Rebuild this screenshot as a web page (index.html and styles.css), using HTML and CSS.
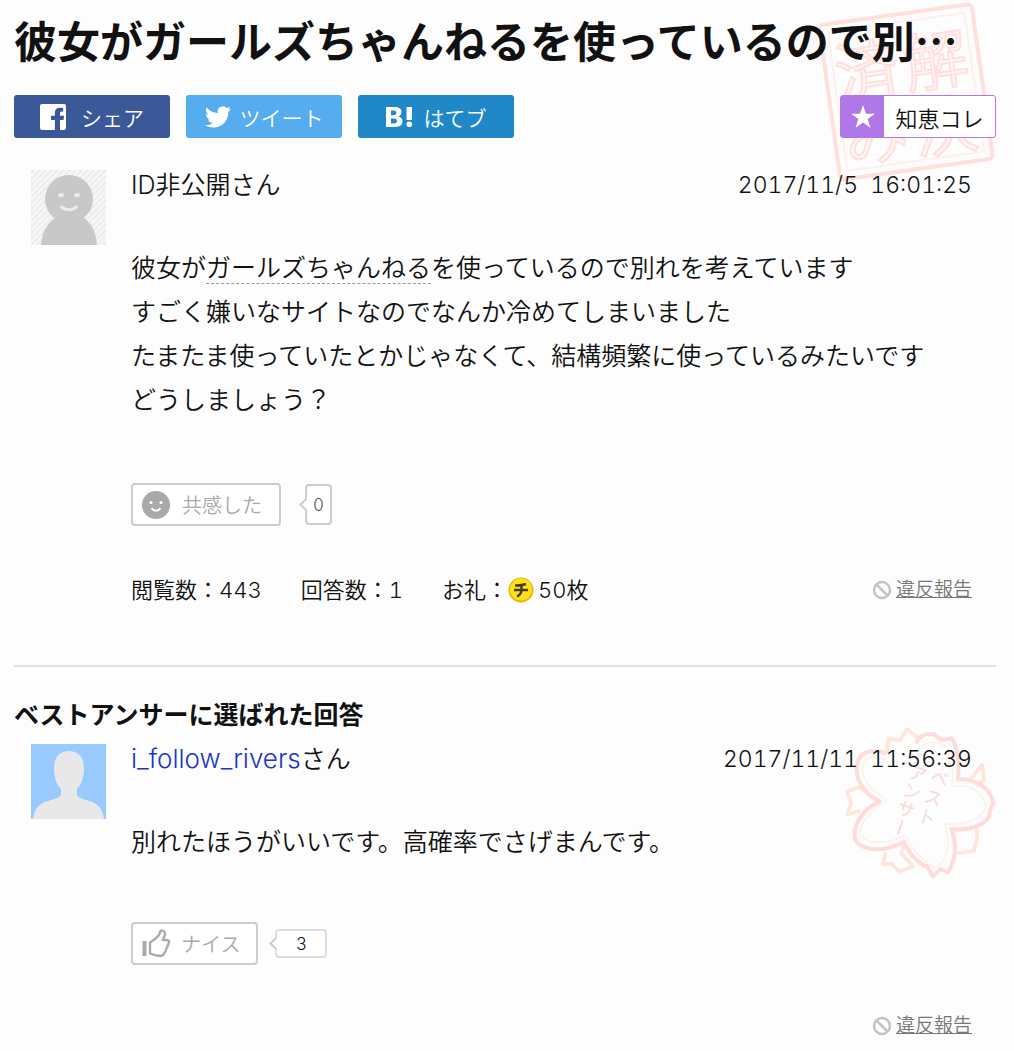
FILE: index.html
```html
<!DOCTYPE html>
<html lang="ja">
<head>
    <meta charset="UTF-8">
    <meta name="viewport" content="width=device-width, initial-scale=1.0">
    <title>彼女がガールズちゃんねるを使っているので別… - 知恵袋</title>
    <link rel="stylesheet" href="styles.css">
</head>
<body>
    <main class="page">
        <!-- solved stamp -->
        <svg class="stamp stamp-solved" viewBox="0 0 190 190" aria-hidden="true">
            <g transform="rotate(-8 95 95)" fill="none" stroke="#ffe0dd" stroke-width="3">
                <rect x="19" y="17" width="154" height="156" rx="4" stroke-width="4"/>
                <rect x="27" y="25" width="138" height="140" rx="2" stroke="#fff0ec" stroke-width="2"/>
                <g class="stamp-text" stroke-width="2">
                    <text x="28" y="92">済</text>
                    <text x="28" y="158">み</text>
                    <text x="98" y="92">解</text>
                    <text x="98" y="158">決</text>
                </g>
            </g>
        </svg>

        <h1 class="title">彼女がガールズちゃんねるを使っているので別…</h1>

        <div class="share">
            <button type="button" class="share-btn facebook">
                <svg width="26" height="26" viewBox="0 0 26 26" aria-hidden="true">
                    <path fill="#fff" d="M2 0h22a2 2 0 0 1 2 2v22a2 2 0 0 1-2 2h-4V16h3.500l.6-4.200H20V9.500c0-1.300.5-2 2-2h1.200V4c-.5-.1-1.700-.2-3-.2-3.200 0-5.300 1.900-5.300 5.200v2.800H11V16h3.900v10H2a2 2 0 0 1-2-2V2a2 2 0 0 1 2-2z"/>
                </svg>
                <span>シェア</span>
            </button>
            <button type="button" class="share-btn twitter">
                <svg width="26" height="26" viewBox="0 0 24 24" aria-hidden="true">
                    <path fill="#fff" d="M23.950 4.570a10 10 0 0 1-2.820.770 4.960 4.960 0 0 0 2.160-2.720c-.950.550-2 .950-3.130 1.180a4.920 4.920 0 0 0-8.380 4.480C7.690 8.090 4.070 6.130 1.640 3.160a4.820 4.820 0 0 0-.670 2.480c0 1.710.870 3.210 2.190 4.100a4.900 4.900 0 0 1-2.230-.620v.060a4.920 4.920 0 0 0 3.950 4.830 5 5 0 0 1-2.210.080 4.940 4.940 0 0 0 4.600 3.420A9.870 9.870 0 0 1 0 19.540a13.990 13.990 0 0 0 7.550 2.210c9.050 0 14-7.500 14-13.980 0-.210 0-.420-.020-.630a9.940 9.940 0 0 0 2.460-2.550z"/>
                </svg>
                <span>ツイート</span>
            </button>
            <button type="button" class="share-btn hatena">
                <svg width="27" height="22" viewBox="0 0 27 22" aria-hidden="true">
                    <path fill="#fff" fill-rule="evenodd" d="M0 1h8c5 0 7.500 1.500 7.500 5 0 2.500-1.300 4-3.500 4.500 2.800.4 4.500 2 4.500 4.800 0 3.900-2.800 5.700-7.500 5.700H0zM5 4.500v4.700h2.200c2.200 0 3.200-.7 3.200-2.400 0-1.600-1-2.300-3.200-2.300zM5 12.500v5h2.600c2.300 0 3.400-.8 3.400-2.500s-1.100-2.500-3.400-2.500z"/>
                    <path fill="#fff" d="M20.500 1h5.500v13h-5.500z"/>
                    <circle fill="#fff" cx="23.300" cy="18.300" r="2.800"/>
                </svg>
                <span>はてブ</span>
            </button>
            <button type="button" class="collect">
                <span class="collect-icon">
                    <svg width="26" height="26" viewBox="0 0 24 24" aria-hidden="true">
                        <path fill="#fff" d="M12 1l2.700 8h8.300l-6.700 4.900 2.600 8.100L12 17.100 5.100 22l2.600-8.100L1 9h8.300z"/>
                    </svg>
                </span>
                <span class="collect-label">知恵コレ</span>
            </button>
        </div>

        <article class="post">
            <svg class="avatar" viewBox="0 0 75 75" role="img" aria-label="ID非公開">
                <defs>
                    <pattern id="hatch" width="6" height="6" patternUnits="userSpaceOnUse">
                        <path d="M0 6L6 0" stroke="#fafafa" stroke-width="1.500"/>
                    </pattern>
                </defs>
                <path fill="#eee" d="M0 0h75v75H0z"/>
                <path fill="url(#hatch)" d="M0 0h75v75H0z"/>
                <path fill="#c8c8c8" d="M10 75c1-15 8-24 16-28h25c8 4 14 13 15 28z"/>
                <circle cx="38" cy="29" r="24" fill="#c8c8c8"/>
                <ellipse cx="30" cy="25" rx="3" ry="2" fill="#ececec"/>
                <ellipse cx="46" cy="25" rx="3" ry="2" fill="#ececec"/>
                <path d="M30 36c4 5 12 5 16 0" fill="none" stroke="#ececec" stroke-width="3"/>
            </svg>
            <div class="post-body">
                <header class="post-head">
                    <span class="name">ID非公開さん</span>
                    <time datetime="2017-11-05T16:01:25">2017/11/5 &nbsp;16:01:25</time>
                </header>
                <p class="text">彼女が<a class="keyword" href="#">ガールズちゃんねる</a>を使っているので別れを考えています<br>
                    すごく嫌いなサイトなのでなんか冷めてしまいました<br>
                    たまたま使っていたとかじゃなくて、結構頻繁に使っているみたいです<br>
                    どうしましょう？</p>
                <div class="react">
                    <button type="button" class="react-btn empathy">
                        <svg width="28" height="28" viewBox="0 0 28 28" aria-hidden="true">
                            <circle cx="14" cy="14" r="14" fill="#a9a9a9"/>
                            <circle cx="9" cy="11.500" r="1.600" fill="#fff"/>
                            <circle cx="19" cy="11.500" r="1.600" fill="#fff"/>
                            <path d="M9.500 17c2 3.500 7 3.500 9 0" fill="none" stroke="#fff" stroke-width="1.800"/>
                        </svg>
                        <span>共感した</span>
                    </button>
                    <span class="bubble bubble-tall">0</span>
                </div>
                <footer class="post-foot">
                    <ul class="stats">
                        <li>閲覧数：443</li>
                        <li>回答数：1</li>
                        <li>お礼：<svg class="coin" width="26" height="26" viewBox="0 0 26 26" aria-hidden="true">
                                <circle cx="13" cy="13" r="12.500" fill="#e5b800"/>
                                <circle cx="13" cy="12.500" r="11" fill="#ffe01b"/>
                                <path d="M7 8.500c4 .2 8-.5 11-1.500M6 13h14M13.500 8v5c0 3-1.500 5-4.500 6.500" fill="none" stroke="#443d28" stroke-width="2.400"/>
                            </svg>50枚</li>
                    </ul>
                    <a class="report" href="#">
                        <svg width="20" height="20" viewBox="0 0 20 20" aria-hidden="true">
                            <circle cx="10" cy="10" r="8" fill="none" stroke="#c4c4c4" stroke-width="2.500"/>
                            <path d="M4.500 4.500l11 11" stroke="#c4c4c4" stroke-width="2.500"/>
                        </svg>
                        <span>違反報告</span>
                    </a>
                </footer>
            </div>
        </article>

        <section class="best">
            <h2 class="heading">ベストアンサーに選ばれた回答</h2>
            <article class="post">
                <!-- best answer flower -->
                <svg class="stamp stamp-best" viewBox="0 0 582 540" aria-hidden="true">
                    <g fill="none" stroke-linejoin="round">
                        <path stroke="#ffe5da" stroke-width="11" d="M200 128L206 82L240 88L262 54L296 82M413 205L452 204L486 162L492 206L468 225M470 345L472 374L462 420L412 426M254 400L244 428L280 466L238 482L214 458L188 460L198 424M120 300L82 310L94 276L80 242L116 228L180 272"/>
                        <path stroke="#ffdcdc" stroke-width="12" d="M200 128C150 108 108 126 110 178C112 222 146 256 180 272C132 292 98 338 104 382C122 424 196 424 252 392C270 434 304 464 322 466L338 496L362 474L384 484C410 440 410 396 394 354C456 362 514 332 508 304L520 276C510 226 460 202 413 205C422 150 406 92 394 82L366 88L342 70C310 66 290 82 290 98"/>
                        <path stroke="#fff0ec" stroke-width="5" d="M196 146C150 128 124 140 128 180C132 218 160 242 200 268C146 300 116 340 122 372C140 402 204 400 258 372C276 420 306 446 344 470C384 452 394 398 374 338C446 344 492 318 496 286C490 242 446 218 396 226C404 164 396 118 376 104C350 90 318 88 302 112"/>
                    </g>
                    <g class="flower-text" transform="rotate(18 300 270)">
                        <text x="308" y="206">ベ</text>
                        <text x="308" y="268">ス</text>
                        <text x="308" y="330">ト</text>
                        <text x="242" y="214">ア</text>
                        <text x="242" y="270">ン</text>
                        <text x="242" y="326">サ</text>
                        <path d="M268 342v44" stroke="#f6dada" stroke-width="6"/>
                    </g>
                </svg>
                <svg class="avatar" viewBox="0 0 75 75" role="img" aria-label="i_follow_rivers">
                    <path fill="#99caff" d="M0 0h75v75H0z"/>
                    <path fill="#e8e8e8" d="M38 7c10 0 15 7 15 18 0 9-3 16-7 20v6c2 3 6 4 12 6 8 2 13 6 15 18H2c2-12 7-16 15-18 6-2 11-3 13-6v-6c-4-4-7-11-7-20C23 14 28 7 38 7z"/>
                </svg>
                <div class="post-body">
                    <header class="post-head">
                        <span class="name"><a href="#">i_follow_rivers</a>さん</span>
                        <time datetime="2017-11-11T11:56:39">2017/11/11 &nbsp;11:56:39</time>
                    </header>
                    <p class="text">別れたほうがいいです。高確率でさげまんです。</p>
                    <div class="react">
                        <button type="button" class="react-btn nice">
                            <svg width="30" height="30" viewBox="0 0 30 30" aria-hidden="true">
                                <path d="M3.500 12v15" stroke="#aaa" stroke-width="4" fill="none"/>
                                <path d="M9 13.500c4-2.500 8-5.500 9.500-8.500.5-3 1.500-3.600 3-3.400 2.500.4 3 3 2.200 5.200L21.800 11h4c2 0 2.700 1.500 1.900 3-.2 1.400-.5 2-1.200 2.700 0 2-.6 2.800-1.500 3.600 0 1.800-.5 2.700-1.700 3.400-.2 2-1.300 3-3.300 3.300C16 27 12.500 26 9 24.500z" fill="none" stroke="#aaa" stroke-width="2.400" stroke-linejoin="round"/>
                            </svg>
                            <span>ナイス</span>
                        </button>
                        <span class="bubble bubble-wide">3</span>
                    </div>
                    <footer class="post-foot">
                        <a class="report" href="#">
                            <svg width="20" height="20" viewBox="0 0 20 20" aria-hidden="true">
                                <circle cx="10" cy="10" r="8" fill="none" stroke="#c4c4c4" stroke-width="2.500"/>
                                <path d="M4.500 4.500l11 11" stroke="#c4c4c4" stroke-width="2.500"/>
                            </svg>
                            <span>違反報告</span>
                        </a>
                    </footer>
                </div>
            </article>
        </section>
    </main>
</body>
</html>
```
FILE: styles.css
```css
* {
    box-sizing: border-box;
}
body {
    margin: 0;
    background-color: #fdfdfd;
    color: #111;
    font-family: Inter, "Noto Sans CJK JP", sans-serif;
    font-weight: 350;
    font-size: 25px;
    font-variant-numeric: tabular-nums;
}
button {
    font-family: inherit;
    font-weight: inherit;
    cursor: pointer;
}
h1, h2, p, ul {
    margin: 0;
    padding: 0;
}
.page {
    position: relative;
    padding: 14px 18px 10px 14px;
}
.title {
    position: relative;
    font-family: "Noto Sans CJK JP", sans-serif;
    font-size: 43px;
    line-height: 50px;
    font-weight: bold;
    white-space: nowrap;
}

/* share buttons */
.share {
    position: relative;
    display: flex;
    gap: 16px;
    margin-top: 31px;
}
.share-btn,
.collect {
    display: flex;
    align-items: center;
    justify-content: center;
    width: 156px;
    height: 43px;
    padding: 0;
    border: none;
    border-radius: 3px;
    font-size: 21px;
    color: #fff;
}
.facebook {
    gap: 15px;
    background-color: #3b5998;
}
.twitter {
    gap: 9px;
    background-color: #55acee;
}
.hatena {
    gap: 11px;
    background-color: #2088c7;
}
.collect {
    margin-left: auto;
    align-items: stretch;
    border: 1px solid #b077e8;
    background-color: #fff;
    font-size: 22px;
    color: #111;
}
.collect-icon {
    display: flex;
    align-items: center;
    justify-content: center;
    width: 43px;
    background-color: #b077e8;
}
.collect-label {
    flex: 1;
    align-self: center;
    text-align: center;
}

/* posts */
.post {
    position: relative;
    display: flex;
    gap: 25px;
    padding: 0 24px 0 17px;
}
.share + .post {
    margin-top: 32px;
}
.avatar {
    flex: none;
    width: 75px;
    height: 75px;
}
.post-body {
    position: relative;
    flex: 1;
}
.post-head {
    display: flex;
    justify-content: space-between;
    line-height: 30px;
}
.post-head time {
    font-size: 23px;
}
.name a {
    font-size: 26px;
    color: #1a34c4;
    text-decoration: none;
}
.text {
    margin-top: 46px;
    line-height: 44px;
}
.keyword {
    color: inherit;
    text-decoration: none;
    border-bottom: 1px dashed #999;
}
.react {
    display: flex;
    align-items: center;
    gap: 24px;
    margin-top: 61px;
}
.best .react {
    margin-top: 58px;
}
.react-btn {
    display: flex;
    align-items: center;
    gap: 12px;
    height: 43px;
    padding: 0 17px 0 9px;
    border: 2px solid #ccc;
    border-radius: 4px;
    background-color: #fff;
    font-size: 20px;
    color: #aaa;
}
.react-btn.nice {
    gap: 10px;
    padding: 0 16px 0 8px;
}
.nice + .bubble {
    margin-left: -7px;
}
.bubble {
    position: relative;
    display: flex;
    align-items: center;
    justify-content: center;
    border: 2px solid #ccc;
    border-radius: 4px;
    background-color: #fff;
    font-size: 17px;
}
.bubble::before {
    content: "";
    position: absolute;
    left: -6px;
    width: 7px;
    height: 7px;
    border: solid #ccc;
    border-width: 0 0 2px 2px;
    background-color: #fff;
    transform: rotate(45deg);
}
.bubble-tall {
    width: 27px;
    height: 41px;
    color: #555;
}
.bubble-wide {
    width: 52px;
    height: 29px;
    border-color: #ddd;
}
.post-foot {
    display: flex;
    justify-content: space-between;
    margin-top: 48px;
    line-height: 32px;
}
.stats {
    display: flex;
    gap: 39px;
    list-style: none;
    font-size: 22px;
}
.stats li {
    display: flex;
    align-items: center;
}
.coin {
    margin-right: 4px;
}
.report {
    display: flex;
    align-items: center;
    gap: 4px;
    margin-left: auto;
    font-size: 19px;
    line-height: 26px;
    color: #777;
    text-decoration: none;
}
.report span {
    text-decoration: underline;
}

/* best answer */
.best {
    margin-top: 59px;
    padding-top: 31px;
    border-top: 2px solid #e0e0e0;
}
.heading {
    margin-bottom: 12px;
    font-size: 25px;
    line-height: 34px;
    font-weight: bold;
}

/* stamps */
.stamp {
    position: absolute;
}
.stamp-solved {
    top: -3px;
    right: 14px;
    width: 190px;
    height: 190px;
}
.stamp-text {
    font-family: "Noto Sans CJK JP", sans-serif;
    font-size: 64px;
    fill: #fff6f4;
}
.stamp-best {
    top: -33px;
    right: -18px;
    width: 194px;
    height: 180px;
}
.flower-text {
    font-family: "Noto Sans CJK JP", sans-serif;
    font-size: 54px;
    font-weight: 400;
    fill: #f6dada;
}
```
